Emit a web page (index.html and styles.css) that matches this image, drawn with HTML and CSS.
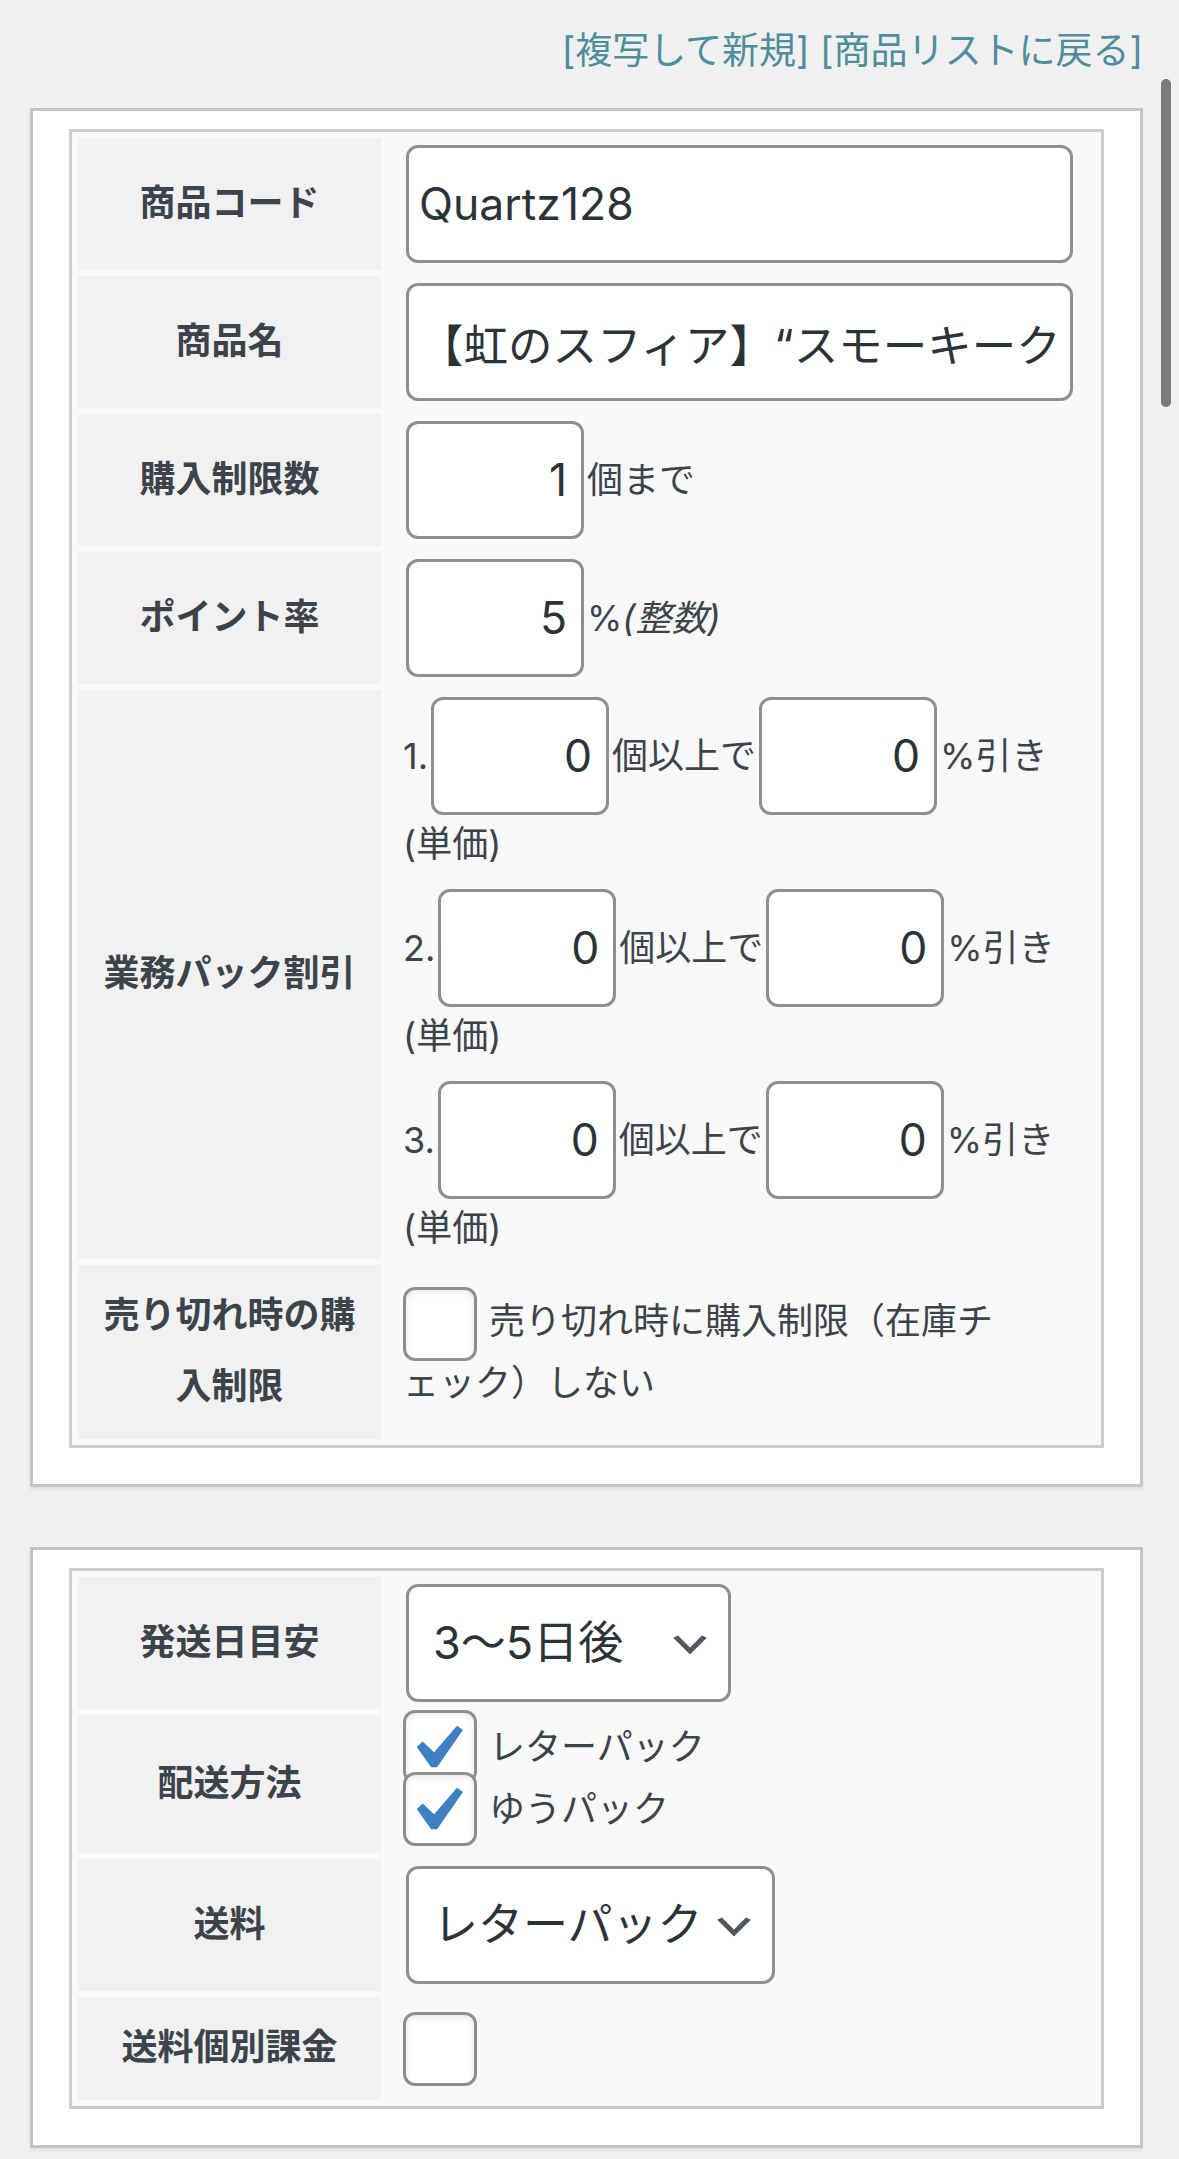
FILE: index.html
```html
<!DOCTYPE html>
<html lang="ja">
<head>
<meta charset="utf-8">
<title>商品編集</title>
<link rel="stylesheet" href="styles.css">
</head>
<body>
<div class="page">
  <div class="actions"><a href="#" class="act">[複写して新規]</a> <a href="#" class="act">[商品リストに戻る]</a></div>

  <div class="postbox">
    <table class="item-table">
      <tr>
        <th>商品コード</th>
        <td><input class="text wide" type="text" value="Quartz128"></td>
      </tr>
      <tr>
        <th>商品名</th>
        <td><input class="text wide" type="text" value="【虹のスフィア】“スモーキークォーツ”128"></td>
      </tr>
      <tr>
        <th>購入制限数</th>
        <td><div class="inline"><input class="text num" type="text" value="1"><span>個まで</span></div></td>
      </tr>
      <tr>
        <th>ポイント率</th>
        <td><div class="inline"><input class="text num" type="text" value="5"><span>%<em>(整数)</em></span></div></td>
      </tr>
      <tr>
        <th>業務パック割引</th>
        <td class="discount">
          <div class="entry">
            <div class="inline"><span class="idx">1.</span><input class="text num" type="text" value="0"><span>個以上で</span><input class="text num" type="text" value="0"><span>%引き</span></div>
            <div class="note">(単価)</div>
          </div>
          <div class="entry">
            <div class="inline"><span class="idx">2.</span><input class="text num" type="text" value="0"><span>個以上で</span><input class="text num" type="text" value="0"><span>%引き</span></div>
            <div class="note">(単価)</div>
          </div>
          <div class="entry">
            <div class="inline"><span class="idx">3.</span><input class="text num" type="text" value="0"><span>個以上で</span><input class="text num" type="text" value="0"><span>%引き</span></div>
            <div class="note">(単価)</div>
          </div>
        </td>
      </tr>
      <tr>
        <th>売り切れ時の購入制限</th>
        <td><div class="wrapcheck"><span class="cb"></span>売り切れ時に購入制限（在庫チェック）しない</div></td>
      </tr>
    </table>
  </div>

  <div class="postbox">
    <table class="item-table">
      <tr>
        <th>発送日目安</th>
        <td>
          <div class="select sel-ship"><span>3〜5日後</span><svg viewBox="0 0 20 20" aria-hidden="true"><path d="M5 6l5 5 5-5 2 1-7 7-7-7 2-1z" fill="#50575e"/></svg></div>
        </td>
      </tr>
      <tr>
        <th>配送方法</th>
        <td>
          <div class="checkline"><span class="cb"><svg viewBox="0 0 20 20" aria-hidden="true"><path d="M14.83 4.89l1.34.94-5.81 8.38H9.02L5.78 9.67l1.34-1.25 2.57 2.4z" fill="#3f80c3"/></svg></span><span class="cl-text">レターパック</span></div>
          <div class="checkline"><span class="cb"><svg viewBox="0 0 20 20" aria-hidden="true"><path d="M14.83 4.89l1.34.94-5.81 8.38H9.02L5.78 9.67l1.34-1.25 2.57 2.4z" fill="#3f80c3"/></svg></span><span class="cl-text">ゆうパック</span></div>
        </td>
      </tr>
      <tr>
        <th>送料</th>
        <td>
          <div class="select sel-fee"><span>レターパック</span><svg viewBox="0 0 20 20" aria-hidden="true"><path d="M5 6l5 5 5-5 2 1-7 7-7-7 2-1z" fill="#50575e"/></svg></div>
        </td>
      </tr>
      <tr>
        <th>送料個別課金</th>
        <td><span class="cb solo"></span></td>
      </tr>
    </table>
  </div>
</div>
<div class="scrollbar"></div>
</body>
</html>
```

FILE: styles.css
```css
* {
  box-sizing: border-box;
}

html,
body {
  margin: 0;
  padding: 0;
}

body {
  background: #f0f0f1;
  font-family: Inter, "Noto Sans CJK JP", sans-serif;
  font-size: 36px;
  color: #3c434a;
}

.page {
  padding: 26px 36px 10px 30px;
}

.actions {
  text-align: right;
  height: 50px;
  line-height: 50px;
  margin-bottom: 32px;
  font-size: 37px;
}

.act {
  color: #4e8d9c;
  text-decoration: none;
}

.postbox {
  background: #fff;
  border: 3px solid #c3c4c7;
  box-shadow: 0 3px 3px rgba(0, 0, 0, 0.05);
  padding: 18px 36px 36px;
}

.postbox + .postbox {
  margin-top: 60px;
}

.item-table {
  width: 100%;
  border: 3px solid #ccc;
  background: #f9f9f9;
  border-collapse: separate;
  border-spacing: 6px;
  table-layout: fixed;
}

.item-table th {
  width: 303px;
  background: #f1f1f1;
  font-weight: 700;
  font-size: 36px;
  text-align: center;
  vertical-align: middle;
  line-height: 71px;
  padding: 15px 16px 17px;
  color: #3c434a;
}

.item-table td {
  padding: 7px 19px 7px 16px;
  vertical-align: middle;
  line-height: 58px;
}

.text {
  height: 118px;
  border: 3px solid #8c8f94;
  border-radius: 12px;
  background: #fff;
  font-family: Inter, "Noto Sans CJK JP", sans-serif;
  font-size: 44.5px;
  color: #2c3338;
  padding: 0 10px;
  margin: 0 3px;
  outline: none;
  -webkit-appearance: none;
  appearance: none;
}

.wide {
  display: block;
  width: calc(100% - 6px);
}

.num {
  width: 178px;
  text-align: right;
  padding: 0 14px;
  flex: none;
}

.inline {
  display: flex;
  align-items: center;
  white-space: nowrap;
}

.inline em {
  font-style: italic;
}

.entry + .entry {
  margin-top: 16px;
}

.item-table td.discount {
  padding-bottom: 2px;
}

.note {
  line-height: 58px;
}

.cb {
  display: inline-block;
  position: relative;
  width: 74px;
  height: 74px;
  border: 3px solid #8c8f94;
  border-radius: 12px;
  background: #fff;
  box-shadow: inset 0 3px 6px rgba(0, 0, 0, 0.08);
  vertical-align: middle;
  flex: none;
}

.cb svg {
  position: absolute;
  left: -15px;
  top: -9px;
  width: 89px;
  height: 89px;
}

.wrapcheck {
  max-width: 600px;
  line-height: 60px;
}

.wrapcheck .cb {
  margin: -8px 12px -8px 0;
}

.checkline {
  display: flex;
  align-items: flex-start;
  height: 62px;
}

.checkline > * {
  margin-top: -12px;
}

.checkline .cb {
  margin-right: 12px;
}

.checkline .cl-text {
  line-height: 74px;
}

.cb.solo {
  display: block;
}

.select {
  display: flex;
  align-items: center;
  height: 118px;
  margin: 0 3px;
  padding: 0 14px 0 24px;
  border: 3px solid #8c8f94;
  border-radius: 12px;
  background: #fff;
  font-size: 45px;
  color: #2c3338;
  white-space: nowrap;
}

.select svg {
  flex: none;
  width: 48px;
  height: 48px;
  margin-left: auto;
  margin-top: 4px;
}

.sel-ship {
  width: 325px;
}

.sel-fee {
  width: 369px;
}

.scrollbar {
  position: absolute;
  left: 1161px;
  top: 79px;
  width: 10px;
  height: 328px;
  border-radius: 5px;
  background: #7b7b7b;
}
```
